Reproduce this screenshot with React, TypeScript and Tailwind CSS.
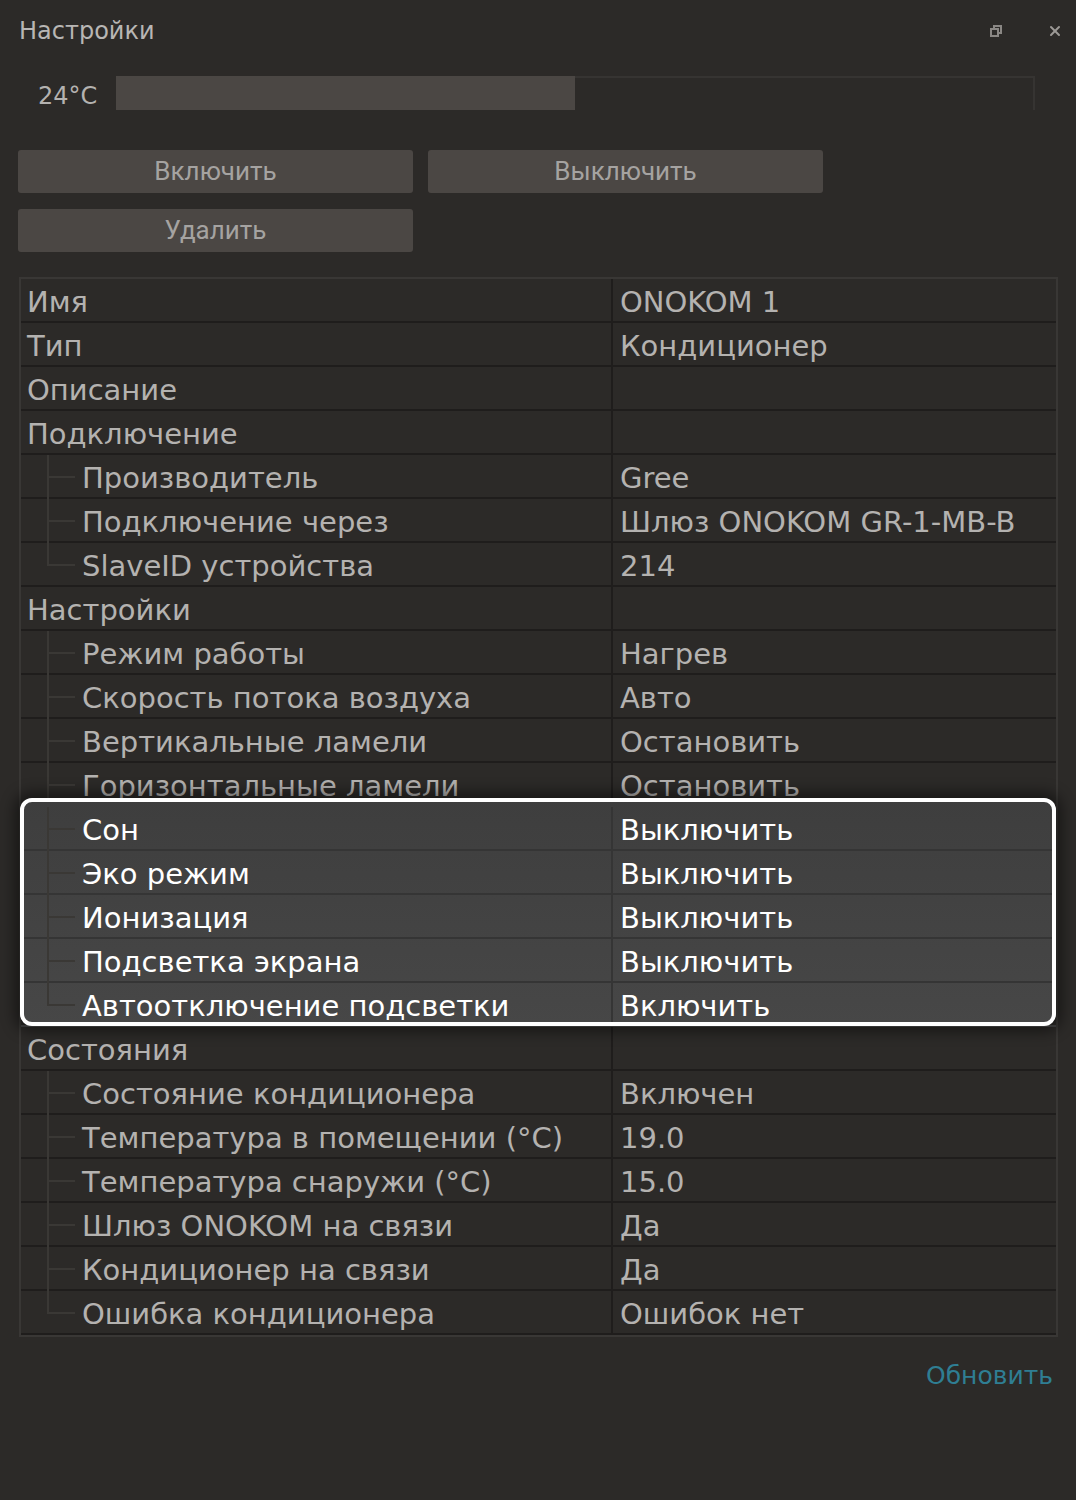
import { X } from "lucide-react";

type Row = { label: string; value?: string; child?: boolean; last?: boolean };

const before: Row[] = [
  { label: "Имя", value: "ONOKOM 1" },
  { label: "Тип", value: "Кондиционер" },
  { label: "Описание" },
  { label: "Подключение" },
  { label: "Производитель", value: "Gree", child: true },
  { label: "Подключение через", value: "Шлюз ONOKOM GR-1-MB-B", child: true },
  { label: "SlaveID устройства", value: "214", child: true, last: true },
  { label: "Настройки" },
  { label: "Режим работы", value: "Нагрев", child: true },
  { label: "Скорость потока воздуха", value: "Авто", child: true },
  { label: "Вертикальные ламели", value: "Остановить", child: true },
  { label: "Горизонтальные ламели", value: "Остановить", child: true },
];

const highlighted: Row[] = [
  { label: "Сон", value: "Выключить", child: true },
  { label: "Эко режим", value: "Выключить", child: true },
  { label: "Ионизация", value: "Выключить", child: true },
  { label: "Подсветка экрана", value: "Выключить", child: true },
  { label: "Автоотключение подсветки", value: "Включить", child: true, last: true },
];

const after: Row[] = [
  { label: "Состояния" },
  { label: "Состояние кондиционера", value: "Включен", child: true },
  { label: "Температура в помещении (°C)", value: "19.0", child: true },
  { label: "Температура снаружи (°C)", value: "15.0", child: true },
  { label: "Шлюз ONOKOM на связи", value: "Да", child: true },
  { label: "Кондиционер на связи", value: "Да", child: true },
  { label: "Ошибка кондиционера", value: "Ошибок нет", child: true, last: true },
];

function PropRow({ row, hl }: { row: Row; hl?: boolean }) {
  return (
    <div
      className={
        "relative flex h-[44px] border-b-2 " +
        (hl ? "border-[#353535] text-white" : "border-[#1f1d1c] text-[#b4b2b0]")
      }
    >
      <div className="relative flex w-[590px] shrink-0 items-center pl-[6px] pt-[6px]">
        {row.child && (
          <>
            <span
              className={
                "absolute left-[26px] top-0 w-[2px] bg-[#3a3835] " +
                (row.last ? "h-[22px]" : "h-[46px]")
              }
            />
            <span className="absolute left-[26px] top-[21px] h-[2px] w-[28px] bg-[#3a3835]" />
          </>
        )}
        <span className={row.child ? "pl-[55px]" : ""}>{row.label}</span>
      </div>
      <div
        className={
          "flex flex-1 items-center border-l-2 pl-[7px] pt-[6px] " +
          (hl ? "border-[#353535]" : "border-[#1f1d1c]")
        }
      >
        {row.value}
      </div>
    </div>
  );
}

function RestoreIcon() {
  return (
    <svg width="14" height="14" viewBox="0 0 14 14" fill="none" stroke="#8a8784" strokeWidth="2">
      <rect x="5" y="2" width="7" height="7" />
      <rect x="2" y="5" width="7" height="7" fill="#2c2a28" />
    </svg>
  );
}

export default function App() {
  return (
    <div
      className="min-h-[1500px] w-[1076px] bg-[#2c2a28] px-[18px] text-[#b4b2b0]"
      style={{ fontFamily: '"DejaVu Sans", Verdana, sans-serif' }}
    >
      <header className="flex h-[62px] items-center">
        <h1 className="pl-px text-[24px] text-[#b8b6b4]">Настройки</h1>
        <div className="ml-auto -mr-[5px] flex items-center gap-[44px]">
          <RestoreIcon />
          <X className="h-[16px] w-[16px] text-[#9c9996]" strokeWidth={3} />
        </div>
      </header>

      <div className="mt-[14px] flex h-[34px] items-center pr-[23px]">
        <span className="w-[98px] pl-[20px] pt-[6px] text-[24px]">24°C</span>
        <div className="flex h-full flex-1 border-r-2 border-t-2 border-[#363432]">
          <div className="-mt-[2px] h-[34px] w-1/2 bg-[#4b4744]" />
        </div>
      </div>

      <div
        className="mt-[40px] grid w-[805px] grid-cols-2 gap-x-[15px] gap-y-[16px] text-[26px] text-[#a5a3a1]"
        style={{ fontFamily: '"Liberation Sans Narrow", "Roboto", sans-serif' }}
      >
        <button className="h-[43px] rounded-[3px] bg-[#4b4744]">Включить</button>
        <button className="h-[43px] rounded-[3px] bg-[#4b4744]">Выключить</button>
        <button className="h-[43px] rounded-[3px] bg-[#4b4744]">Удалить</button>
      </div>

      <div className="mt-[25px] ml-px w-[1039px] border-2 border-[#393735] text-[29px]">
        {before.map((r) => (
          <PropRow key={r.label} row={r} />
        ))}
        <div className="relative z-10">
          <div className="absolute -top-[9px] bottom-[1px] -left-px right-0 rounded-[12px] bg-gradient-to-b from-[#3e3e3e] to-[#474747] shadow-[0_0_14px_6px_rgba(0,0,0,0.45)]" />
          {highlighted.map((r) => (
            <PropRow key={r.label} row={r} hl />
          ))}
          <div className="pointer-events-none absolute -top-[9px] bottom-[1px] -left-px right-0 rounded-[12px] border-4 border-white" />
        </div>
        {after.map((r) => (
          <PropRow key={r.label} row={r} />
        ))}
      </div>

      <div className="mt-[20px] flex justify-end pr-[5px]">
        <button className="text-[25px] text-[#2f7e93]">Обновить</button>
      </div>
    </div>
  );
}
